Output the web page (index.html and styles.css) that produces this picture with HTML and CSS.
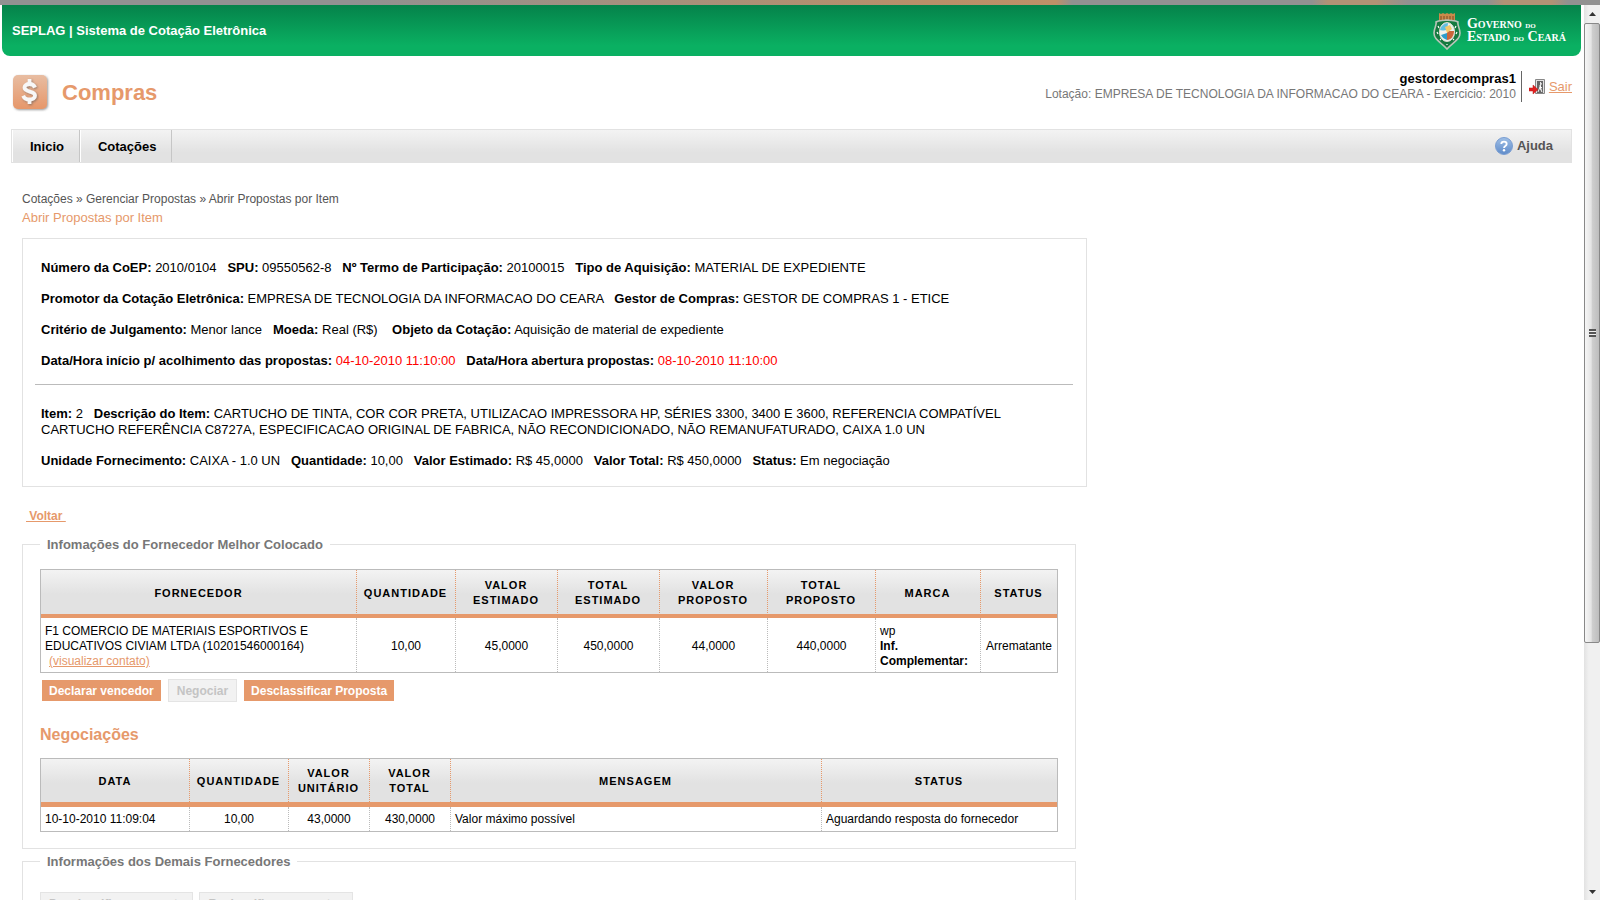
FILE: index.html
```html
<!DOCTYPE html>
<html lang="pt-BR">
<head>
<meta charset="utf-8">
<title>SEPLAG | Sistema de Cotação Eletrônica</title>
<link rel="stylesheet" href="styles.css">
</head>
<body>
<div class="window">
  <div class="window-edge"></div>
  <div class="viewport">
    <div class="page">
      <header class="banner">
        <span class="banner-title">SEPLAG | Sistema de Cotação Eletrônica</span>
        <div class="gov">
          <svg class="gov-crest" viewBox="0 0 28 38" width="28" height="38" aria-hidden="true">
            <path d="M6 1l2 1 2-1 2 1 2-1 2 1 2-1 2 1 2-1v8H6z" fill="#c98a4b"/>
            <path d="M8 4v4M11 4v4M14 4v4M17 4v4M20 4v4" stroke="#7a4a22" stroke-width="1"/>
            <path d="M14 8C10 9 6 8 3 10c1 3-2 6-2 11 0 7 7 9 13 16 6-7 13-9 13-16 0-5-3-8-2-11-3-2-7-1-11-2z" fill="#157a40" stroke="#b9c4b9" stroke-width="1.6"/>
            <path d="M5 14l1 2M4 20l1 2M7 27l1 1M23 14l-1 2M24 20l-1 2M21 27l-1 1M14 32v1" stroke="#fff" stroke-width="1.2"/>
            <ellipse cx="14" cy="20" rx="7.600" ry="9.500" fill="#e9f1f2" stroke="#d9dccb" stroke-width="1"/>
            <path d="M7 18c1-4 4-7 8-7l-1 9z" fill="#62bfe0"/>
            <path d="M7 19l7-1v10c-4-1-7-4-7-9z" fill="#f2f2ec"/>
            <path d="M14 19h7c0 5-3 9-7 9z" fill="#c9653a"/>
            <path d="M8 23l6-2v7c-3-1-5-3-6-5z" fill="#2c9ccb"/>
            <path d="M12 15l5-2 2 4-5 4z" fill="#f3c86b"/>
          </svg>
          <div class="gov-name"><span>Governo <small>do</small></span><span>Estado <small>do</small> Ceará</span></div>
        </div>
      </header>

      <div class="brand-row">
        <div class="brand">
          <svg width="40" height="42" viewBox="0 0 40 42" aria-hidden="true">
            <defs>
              <linearGradient id="tile" x1="0" y1="0" x2="0" y2="1"><stop offset="0" stop-color="#e8bda2"/><stop offset="1" stop-color="#e6976a"/></linearGradient>
              <filter id="soft" x="-20%" y="-20%" width="150%" height="150%"><feDropShadow dx="1" dy="1" stdDeviation="1.2" flood-color="#555" flood-opacity=".6"/></filter>
            </defs>
            <rect x="2" y="3" width="34" height="34" rx="5" fill="url(#tile)" filter="url(#soft)"/>
            <g fill="none" stroke="#f7f7f7" filter="url(#soft)">
              <path d="M24 15.500C23 13 21 12 18.500 12c-3 0-5 1.500-5 3.600 0 5.200 10.500 2.800 10.500 7.900 0 2.500-2.300 4-5.500 4-3 0-5.200-1-6.300-3.800" stroke-width="3.800"/>
              <path d="M18.500 7v5M18.500 27v5" stroke-width="3.600"/>
            </g>
          </svg>
          <h1>Compras</h1>
        </div>
        <div class="user">
          <div class="user-info"><strong>gestordecompras1</strong><span>Lotação: EMPRESA DE TECNOLOGIA DA INFORMACAO DO CEARA - Exercicio: 2010</span></div>
          <a class="logout" href="#">
            <svg width="16" height="16" viewBox="0 0 16 16" aria-hidden="true">
              <path d="M6.500.5h9v14h-9z" fill="#e2e2e2" stroke="#888"/>
              <path d="M8 2h6v12H8z" fill="#666"/>
              <path d="M11 3.500a1.300 1.300 0 1 1 0 2.600v3l2 4M11 8l-2 5M11 7l2 2" fill="#fff" stroke="#fff" stroke-width=".9"/>
              <path d="M0 9h4V6l5 4.500-5 4.500v-3H0z" fill="#e02020" stroke="#c01818" stroke-width=".5"/>
            </svg>
            <span>Sair</span>
          </a>
        </div>
      </div>

      <nav class="menu">
        <a class="menu-item" href="#">Inicio</a>
        <a class="menu-item" href="#">Cotações</a>
        <a class="help" href="#">
          <svg width="18" height="18" viewBox="0 0 18 18" aria-hidden="true">
            <defs><linearGradient id="ball" x1="0" y1="0" x2="0" y2="1"><stop offset="0" stop-color="#9fbfe6"/><stop offset="1" stop-color="#5f8bc9"/></linearGradient></defs>
            <circle cx="9" cy="9" r="8.500" fill="url(#ball)" stroke="#7a9ed2"/>
            <path d="M6.300 7C6.300 3.800 11.700 3.800 11.700 7c0 2-2.700 2-2.700 4" fill="none" stroke="#fff" stroke-width="1.800"/>
            <circle cx="9" cy="13.300" r="1.200" fill="#fff"/>
          </svg>
          <span>Ajuda</span>
        </a>
      </nav>

      <main class="content">
        <div class="crumbs">Cotações » Gerenciar Propostas » Abrir Propostas por Item</div>
        <h2 class="page-title">Abrir Propostas por Item</h2>

        <section class="details">
          <p><b>Número da CoEP:</b> 2010/0104 &nbsp; <b>SPU:</b> 09550562-8 &nbsp; <b>Nº Termo de Participação:</b> 20100015 &nbsp; <b>Tipo de Aquisição:</b> MATERIAL DE EXPEDIENTE</p>
          <p><b>Promotor da Cotação Eletrônica:</b> EMPRESA DE TECNOLOGIA DA INFORMACAO DO CEARA &nbsp; <b>Gestor de Compras:</b> GESTOR DE COMPRAS 1 - ETICE</p>
          <p><b>Critério de Julgamento:</b> Menor lance &nbsp; <b>Moeda:</b> Real (R$) &nbsp;&nbsp; <b>Objeto da Cotação:</b> Aquisição de material de expediente</p>
          <p><b>Data/Hora início p/ acolhimento das propostas:</b> <span class="date">04-10-2010 11:10:00</span> &nbsp; <b>Data/Hora abertura propostas:</b> <span class="date">08-10-2010 11:10:00</span></p>
          <hr>
          <p><b>Item:</b> 2 &nbsp; <b>Descrição do Item:</b> CARTUCHO DE TINTA, COR COR PRETA, UTILIZACAO IMPRESSORA HP, SÉRIES 3300, 3400 E 3600, REFERENCIA COMPATÍVEL CARTUCHO REFERÊNCIA C8727A, ESPECIFICACAO ORIGINAL DE FABRICA, NÃO RECONDICIONADO, NÃO REMANUFATURADO, CAIXA 1.0 UN</p>
          <p><b>Unidade Fornecimento:</b> CAIXA - 1.0 UN &nbsp; <b>Quantidade:</b> 10,00 &nbsp; <b>Valor Estimado:</b> R$ 45,0000 &nbsp; <b>Valor Total:</b> R$ 450,0000 &nbsp; <b>Status:</b> Em negociação</p>
        </section>

        <a class="back" href="#">&nbsp;Voltar&nbsp;</a>

        <fieldset class="group">
          <legend>Infomações do Fornecedor Melhor Colocado</legend>
          <table class="grid">
            <colgroup><col><col class="c-qty"><col class="c-est"><col class="c-est"><col class="c-prop"><col class="c-prop"><col class="c-brand"><col class="c-status"></colgroup>
            <thead><tr><th>Fornecedor</th><th>Quantidade</th><th>Valor<br>Estimado</th><th>Total<br>Estimado</th><th>Valor<br>Proposto</th><th>Total<br>Proposto</th><th>Marca</th><th>Status</th></tr></thead>
            <tbody><tr>
              <td>F1 COMERCIO DE MATERIAIS ESPORTIVOS E EDUCATIVOS CIVIAM LTDA (10201546000164) <a class="contact" href="#">(visualizar contato)</a></td>
              <td class="num">10,00</td><td class="num">45,0000</td><td class="num">450,0000</td><td class="num">44,0000</td><td class="num">440,0000</td>
              <td>wp<br><b>Inf. Complementar:</b></td><td class="num">Arrematante</td>
            </tr></tbody>
          </table>
          <div class="actions">
            <button class="btn" type="button">Declarar vencedor</button>
            <button class="btn" type="button" disabled>Negociar</button>
            <button class="btn" type="button">Desclassificar Proposta</button>
          </div>
          <h3>Negociações</h3>
          <table class="grid grid-log">
            <colgroup><col class="c-date"><col class="c-qty"><col class="c-val"><col class="c-val"><col class="c-msg"><col></colgroup>
            <thead><tr><th>Data</th><th>Quantidade</th><th>Valor<br>Unitário</th><th>Valor<br>Total</th><th>Mensagem</th><th>Status</th></tr></thead>
            <tbody><tr><td>10-10-2010 11:09:04</td><td class="num">10,00</td><td class="num">43,0000</td><td class="num">430,0000</td><td>Valor máximo possível</td><td>Aguardando resposta do fornecedor</td></tr></tbody>
          </table>
        </fieldset>

        <fieldset class="group">
          <legend>Informações dos Demais Fornecedores</legend>
          <div class="actions actions-flush">
            <button class="btn" type="button" disabled>Desclassificar proposta</button>
            <button class="btn" type="button" disabled>Reclassificar propostas</button>
          </div>
        </fieldset>
      </main>
    </div>

    <div class="scroll" aria-hidden="true">
      <svg class="scroll-arrow" width="7" height="4" viewBox="0 0 7 4"><path d="M3.500 0L7 4H0z" fill="#333"/></svg>
      <div class="scroll-thumb"><span class="grip"></span></div>
      <div class="scroll-rest"></div>
      <svg class="scroll-arrow" width="7" height="4" viewBox="0 0 7 4"><path d="M0 0h7L3.500 4z" fill="#333"/></svg>
    </div>
  </div>
</div>
</body>
</html>
```
FILE: styles.css
```css
* { box-sizing: border-box; }

body {
  margin: 0;
  background: #fff;
  color: #000;
  font: 13px/16px "Liberation Sans", Arial, sans-serif;
}

h1, h2, h3, p { margin: 0; }
a { color: #e6996b; }

.window {
  display: flex;
  flex-direction: column;
  height: 100vh;
  overflow: hidden;
}

.window-edge {
  flex: 0 0 5px;
  background: linear-gradient(90deg, #919191 22%, #b98f69 58%, #be9068 66%, #919191 67%, #919191 82%, #b29275 83%, #b29275 86%, #919191 88%, #919191 93%, #b29275 94%, #b29275 97%, #919191 98%);
}

.viewport {
  flex: 1;
  display: flex;
  min-height: 0;
}

.page {
  flex: 1;
  min-width: 0;
  overflow: hidden;
}

/* Top banner */
.banner {
  display: flex;
  align-items: center;
  justify-content: space-between;
  height: 51px;
  margin: 0 3px 0 2px;
  padding: 0 15px 0 10px;
  border-radius: 0 0 8px 8px;
  background: linear-gradient(#05824a, #0ab062 80%);
}
.banner-title { color: #fff; font-weight: bold; }
.gov { display: flex; align-items: center; gap: 6px; }
.gov-name {
  display: flex;
  flex-direction: column;
  color: #fff;
  font: bold 14px/12px "Liberation Serif", "Times New Roman", serif;
  font-variant: small-caps;
}
.gov-name small { font-size: 10px; }

/* Module name and signed-in user */
.brand-row {
  display: flex;
  align-items: center;
  justify-content: space-between;
  margin: 0 12px 0 11px;
  height: 73px;
}
.brand { display: flex; align-items: center; gap: 11px; }
.brand h1 { color: #e6996b; font-size: 22px; line-height: 28px; }
.user { display: flex; align-items: center; margin-bottom: 12px; }
.user-info {
  display: flex;
  flex-direction: column;
  padding-right: 5px;
  border-right: 1px solid #666;
  line-height: 15px;
  text-align: right;
}
.user-info span { color: #777; font-size: 12px; line-height: 16px; }
.logout { display: flex; align-items: center; gap: 4px; padding-left: 7px; text-decoration: none; }
.logout span { text-decoration: underline; }

/* Main menu */
.menu {
  display: flex;
  height: 34px;
  margin: 0 12px 0 11px;
  border: 1px solid #e2e2e2;
  background: linear-gradient(#f3f3f3, #e2e2e2 70%);
  font-weight: bold;
}
.menu-item {
  display: flex;
  align-items: center;
  padding: 1px 15px 0 17px;
  border-left: 1px solid #fff;
  border-right: 1px solid #c6c6c6;
  color: #000;
  text-decoration: none;
}
.help {
  display: flex;
  align-items: center;
  gap: 4px;
  margin-left: auto;
  padding-right: 18px;
  color: #555;
  text-decoration: none;
}

/* Content */
.content { padding: 27px 22px 40px; }
.crumbs { color: #555; font-size: 12px; line-height: 18px; }
.page-title {
  margin: 1px 0 11px;
  color: #e6996b;
  font-size: 13px;
  font-weight: normal;
  line-height: 18px;
}

.details {
  max-width: 1065px;
  padding: 21px 13px 17px 12px;
  border: 1px solid #e2e2e2;
}
.details p { padding: 0 65px 0 6px; }
.details p + p { margin-top: 15px; }
.details hr { margin: 15px 0 21px; border: 0; border-top: 1px solid #bbb; }
.date { color: #f00; }

.back {
  display: block;
  width: max-content;
  margin: 21px 0 11px 4px;
  font-size: 12px;
  font-weight: bold;
}

.group {
  max-width: 1054px;
  margin: 0 0 3px;
  padding: 16px 17px;
  border: 1px solid #e2e2e2;
}
.group legend { padding: 2px 7px 0; color: #777; font-weight: bold; }
.group h3 { margin: 23px 0 13px; color: #e6996b; font-size: 16px; line-height: 20px; }

/* Data tables */
.grid {
  width: 100%;
  table-layout: fixed;
  border: 1px solid #bbb;
  border-collapse: separate;
  border-spacing: 0;
  font-size: 12px;
  line-height: 15px;
}
.grid thead { background: linear-gradient(#f3f3f3, #e2e2e2 50%); }
.grid th {
  padding: 8px 2px 6px;
  border-bottom: 4px solid #e6996b;
  font-size: 11px;
  letter-spacing: 1px;
  text-transform: uppercase;
}
.grid td { padding: 6px 4px 3px; }
.grid td + td { border-left: 1px dotted #bbb; }
.grid .num { padding: 6px 1px 3px; text-align: center; }
.grid th + th {
  background: repeating-linear-gradient(#e6996b 0 1px, transparent 1px 2px) left / 1px 100% no-repeat;
}
.contact { display: block; width: max-content; margin-left: 4px; }
.c-qty { width: 99px; }
.c-est { width: 102px; }
.c-prop { width: 108px; }
.c-brand { width: 105px; }
.c-status { width: 77px; }
.grid-log th { padding: 7px 2px 6px; border-bottom-width: 5px; }
.grid-log td, .grid-log .num { padding-top: 5px; padding-bottom: 4px; }
.c-date { width: 148px; }
.c-val { width: 81px; }
.c-msg { width: 371px; }

/* Buttons */
.actions { display: flex; align-items: center; gap: 7px; margin: 6px 2px 0; }
.actions-flush { gap: 6px; margin: 6px 0 0; }
.btn {
  padding: 4px 7px 2px;
  border: 0;
  background: #e6996b;
  color: #fff;
  font: bold 12px/15px "Liberation Sans", Arial, sans-serif;
}
.btn:disabled { padding: 4px 8px 2px; border: 1px solid #e4e4e4; background: #f2f2f2; color: #c4c4c4; }

/* Scroll bar */
.scroll {
  flex: 0 0 16px;
  display: flex;
  flex-direction: column;
  align-items: center;
  padding: 7px 0 6px;
  background: linear-gradient(90deg, #e2e2e2, #f0f0f0 30%);
}
.scroll-arrow { flex: none; }
.scroll-thumb {
  flex: 618;
  display: flex;
  align-items: center;
  justify-content: center;
  width: 100%;
  margin-top: 7px;
  border: 1px solid #888;
  border-radius: 2px;
  background: linear-gradient(90deg, #f6f6f6, #e4e4e4 45%, #cfcfcf 50%, #bdbdbd);
}
.scroll-rest { flex: 247; }
.grip {
  width: 7px;
  height: 8px;
  background: repeating-linear-gradient(#555 0 2px, #eee 2px 3px);
}
```
